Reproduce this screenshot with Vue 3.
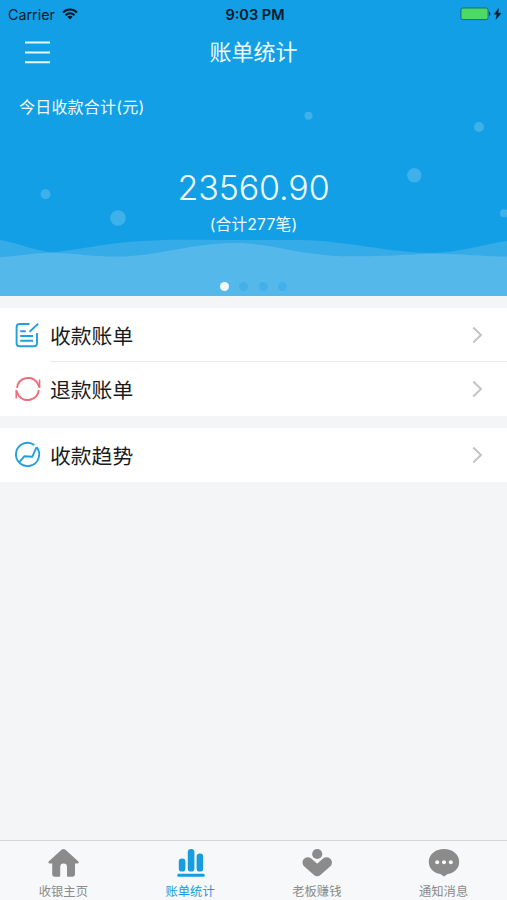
<script setup>
import {ref} from 'vue'

const groups = [
  [
    {icon: 'bill', label: '收款账单'},
    {icon: 'refund', label: '退款账单'}
  ],
  [
    {icon: 'trend', label: '收款趋势'}
  ]
]

const tabs = [
  {icon: 'home', label: '收银主页'},
  {icon: 'chart', label: '账单统计'},
  {icon: 'earn', label: '老板赚钱'},
  {icon: 'message', label: '通知消息'}
]

const activeTab = ref('chart')
const slide = ref(0)
</script>

<template>
  <div class="screen">
    <header class="hero">
      <svg class="scene" viewBox="0 0 507 296">
        <g fill="#fff" fill-opacity=".19">
          <circle cx="308.5" cy="115.8" r="4"/>
          <circle cx="479" cy="127" r="5"/>
          <circle cx="45.5" cy="194.3" r="5"/>
          <circle cx="118" cy="218" r="7.8"/>
          <circle cx="414.3" cy="175.3" r="7.2"/>
          <circle cx="504" cy="213.3" r="4"/>
        </g>
        <path fill="#35abe8" d="M0 240C18 243 32 250 52 252.3C86 249 116 239.7 180 239.7C215 239.7 240 240.2 300 240C350 241 390 253 434 253C462 252 484 244 507 241V296H0Z"/>
        <path fill="#55b8eb" d="M0 257C20 256 35 252.8 52 252.8C74 253 88 256.6 116 256.6C160 256.6 188 243 236 243C270 243 300 256.3 352 256.3C390 256.3 410 254.4 434 253.6C462 254 484 256.5 507 256.5V296H0Z"/>
      </svg>

      <div class="status">
        <div class="status_left">
          <span>Carrier</span>
          <svg width="16" height="12" viewBox="0 0 16 12" fill="none" stroke="#031a2a" stroke-width="2">
            <path d="M1 4.6C5 .6 11 .6 15 4.6"/>
            <path d="M3.5 7.3C6.2 4.7 9.8 4.7 12.5 7.3"/>
            <path d="M5.4 8.7C7 7.3 9 7.3 10.6 8.7L8 11.5Z" fill="#031a2a" stroke="none"/>
          </svg>
        </div>
        <span class="status_time">9:03 PM</span>
        <svg class="status_battery" width="42" height="14" viewBox="0 0 42 14">
          <rect x=".9" y="1" width="27.2" height="11.6" rx="2" fill="#4cd964" stroke="#126f7c"/>
          <path d="M29.2 4.8C30.7 5 30.7 8.6 29.2 8.8Z" fill="#031a2a"/>
          <path d="M38.5 1.6L34.3 7.3H37L36 12.2L41 6.2H38Z" fill="#031a2a" stroke="#031a2a" stroke-width=".5"/>
        </svg>
      </div>

      <div class="nav">
        <svg class="nav_menu" width="25" height="23" viewBox="0 0 25 23" stroke="#e2f9ff" stroke-width="2">
          <path d="M0 1.5H25M0 11.5H25M0 21.3H25"/>
        </svg>
        <h1>账单统计</h1>
      </div>

      <p class="caption">今日收款合计(元)</p>
      <p class="amount">23560.90</p>
      <p class="count">(合计277笔)</p>
      <div class="dots">
        <i v-for="n in 4" :key="n" :class="{ active: slide === n - 1 }" @click="slide = n - 1"></i>
      </div>
    </header>

    <main>
      <ul v-for="(group, index) in groups" :key="index" class="group">
        <li v-for="item in group" :key="item.icon" class="row">
          <svg class="row_icon" width="26" height="26" viewBox="0 0 26 26" fill="none" stroke-width="1.9">
            <g v-if="item.icon === 'bill'" stroke="#239fdd">
              <path d="M14.5 2H4.6Q1.6 2 1.6 5V21.3Q1.6 24.3 4.6 24.3H19Q22 24.3 22 21.3V11"/>
              <path d="M23.2 1.6L14.6 9.8M5.2 9.2H10.8M5.2 14H18M5.2 18.8H18"/>
            </g>
            <g v-else-if="item.icon === 'refund'" stroke="#ef6b77">
              <path d="M2 11.8A11.2 11.2 0 0 1 22.6 7.3L24.4 11.2"/>
              <path d="M23.8 14.2A11.2 11.2 0 0 1 3.2 18.7L1.4 14.8"/>
              <path d="M24.6 3.6V12M1.2 22.4V14" stroke-width="1.5"/>
            </g>
            <g v-else stroke="#239fdd">
              <path d="M19.4 3.1A11.6 11.6 0 1 0 21.6 5.2"/>
              <path d="M4.2 20.4L9.4 14.2L17.2 14.8L21.6 5.2" stroke-linejoin="round"/>
            </g>
          </svg>
          <div class="row_body">
            <span>{{ item.label }}</span>
            <svg width="11" height="18" viewBox="0 0 11 18" fill="none" stroke="#c4c4c6" stroke-width="2">
              <path d="M1.2 1.5L9 9L1.2 16.5"/>
            </svg>
          </div>
        </li>
      </ul>
    </main>

    <nav class="tabbar">
      <button
          v-for="tab in tabs"
          :key="tab.icon"
          :class="{ active: activeTab === tab.icon }"
          @click="activeTab = tab.icon"
      >
        <svg width="32" height="30" viewBox="0 0 32 30" fill="currentColor">
          <path v-if="tab.icon === 'home'" d="M16.5 .9Q17.5 .9 18.5 1.8L31.4 13.6Q32.4 15.2 30.6 15.4H28V26Q28 28.8 25.3 28.8H21Q20 28.8 20 27.8V18.8Q20 15.4 16.6 15.4Q13.2 15.4 13.2 18.8V27.8Q13.2 28.8 12.2 28.8H7.8Q5.2 28.8 5.2 26V15.4H2.5Q.7 15.2 1.7 13.6L14.5 1.8Q15.5 .9 16.5 .9Z"/>
          <g v-else-if="tab.icon === 'chart'">
            <rect x="4.8" y="10.6" width="6.6" height="13" rx="3.2"/>
            <rect x="13.8" y="1" width="6.6" height="22.6" rx="3.2"/>
            <rect x="22.6" y="5.4" width="6.6" height="18.2" rx="3.2"/>
            <rect x="3.3" y="25.7" width="27.4" height="3.1" rx="1.3"/>
          </g>
          <g v-else-if="tab.icon === 'earn'">
            <circle cx="16.2" cy="6" r="5.1"/>
            <path d="M6.8 14.6L16.2 22.8L25.6 14.6" fill="none" stroke="currentColor" stroke-width="10.6" stroke-linecap="round" stroke-linejoin="round"/>
          </g>
          <g v-else>
            <path d="M16 1C24.7 1 31.2 6.5 31.2 13.7C31.2 20 27 24.6 19.6 26L16 28.6L12.4 26C5 24.6.8 20 .8 13.7C.8 6.5 7.3 1 16 1Z"/>
            <g fill="#f7f8f9">
              <circle cx="9.2" cy="14.2" r="2"/>
              <circle cx="16" cy="14.2" r="2"/>
              <circle cx="22.8" cy="14.2" r="2"/>
            </g>
          </g>
        </svg>
        <span>{{ tab.label }}</span>
      </button>
    </nav>
  </div>
</template>

<style>
body {
  margin: 0;
}
</style>

<style scoped>
.screen {
  display: flex;
  flex-direction: column;
  height: 900px;
  overflow: hidden;
  background: #f3f5f7;
  font-family: Inter, "Noto Sans CJK SC", sans-serif;
}

h1,
p,
ul {
  margin: 0;
  padding: 0;
  font-weight: 400;
}

.hero {
  position: relative;
  flex: none;
  display: flex;
  flex-direction: column;
  height: 296px;
  background: #129fe6;
  color: #effbff;
}

.hero > * {
  position: relative;
}

.hero > .scene {
  position: absolute;
  inset: 0;
  width: 100%;
  height: 100%;
}

.status {
  display: grid;
  grid-template-columns: 1fr auto 1fr;
  align-items: center;
  height: 28px;
  padding: 0 5px 0 8px;
  color: #031a2a;
  font-size: 14.3px;
}

.status_left {
  display: flex;
  align-items: center;
  gap: 7px;
}

.status_time {
  font-size: 14.5px;
  font-weight: 600;
}

.status_battery {
  justify-self: end;
}

.nav {
  display: grid;
  grid-template-columns: 1fr auto 1fr;
  align-items: center;
  height: 48px;
  padding: 0 25px;

  h1 {
    font-size: 22px;
    line-height: 48px;
  }
}

.caption {
  margin-top: 19px;
  padding-left: 19px;
  font-size: 16px;
  letter-spacing: .2px;
  line-height: 24px;
}

.amount {
  margin-top: 48px;
  font-size: 34px;
  font-weight: 350;
  letter-spacing: -.1px;
  line-height: 42px;
  text-align: center;
}

.count {
  margin-top: 4px;
  font-size: 15.7px;
  letter-spacing: .2px;
  line-height: 24px;
  text-align: center;
}

.dots {
  display: flex;
  justify-content: center;
  gap: 10.6px;
  margin-top: 45px;

  i {
    width: 9px;
    height: 9px;
    border-radius: 50%;
    background: #43b0e9;
  }

  .active {
    background: #f3f8fb;
  }
}

main {
  flex: 1;
}

.group {
  margin-top: 12px;
  background: #fff;
  list-style: none;
}

.row {
  display: flex;
  align-items: center;
  height: 54px;
  padding-left: 15px;
  color: #1b1b1b;
  font-size: 20.8px;
}

.row_icon {
  flex: none;
  margin-right: 9px;
  overflow: visible;
}

.row_body {
  flex: 1;
  display: flex;
  align-items: center;
  justify-content: space-between;
  box-sizing: border-box;
  height: 54px;
  padding-right: 24px;
}

.row:not(:last-child) .row_body {
  border-bottom: 1.5px solid #e9eaeb;
}

.tabbar {
  flex: none;
  display: flex;
  box-sizing: border-box;
  height: 60px;
  border-top: 1px solid #d5d6d8;
  background: #f7f8f9;

  button {
    flex: 1;
    display: flex;
    flex-direction: column;
    align-items: center;
    padding: 7px 0 0;
    border: 0;
    background: none;
    color: #8b8b8b;
    font: 12.3px/16px Inter, "Noto Sans CJK SC", sans-serif;
  }

  svg {
    flex: none;
  }

  span {
    margin-top: 6px;
  }

  .active {
    color: #169de0;
  }
}
</style>
